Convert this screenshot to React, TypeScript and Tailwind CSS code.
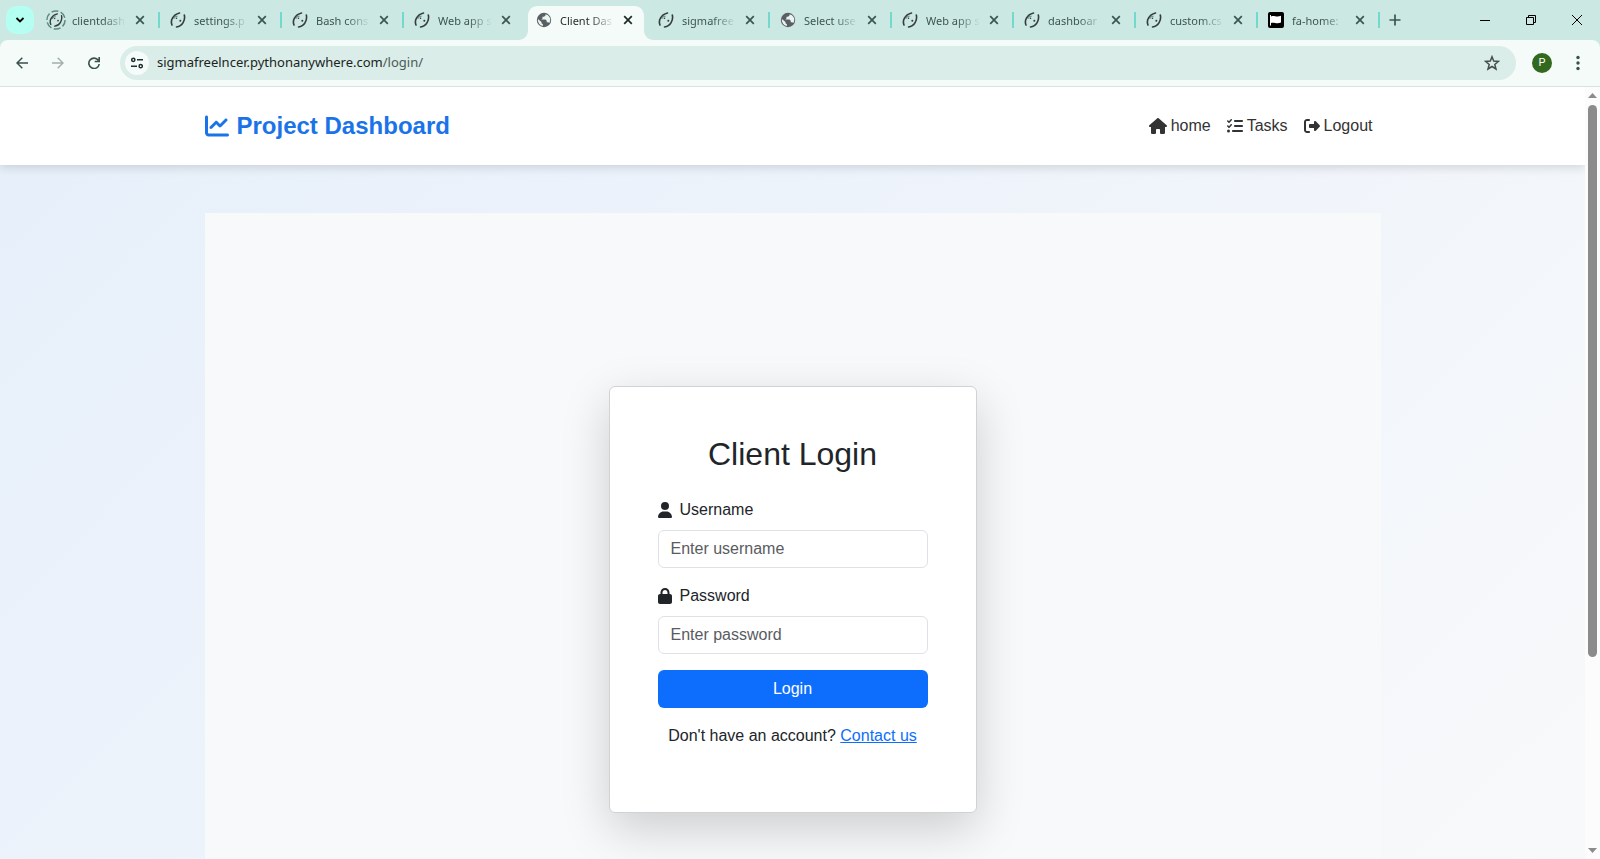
import React from "react";
import { FaChartLine, FaHouse, FaListCheck, FaRightFromBracket, FaUser, FaLock } from "react-icons/fa6";

type IconKind = "snake" | "loading" | "globe" | "flag";
type Tab = { title: string; icon: IconKind; active?: boolean; bar?: boolean };

const tabs: Tab[] = [
  { title: "clientdash", icon: "loading", bar: true },
  { title: "settings.p", icon: "snake", bar: true },
  { title: "Bash cons", icon: "snake", bar: true },
  { title: "Web app s", icon: "snake" },
  { title: "Client Das", icon: "globe", active: true },
  { title: "sigmafree", icon: "snake", bar: true },
  { title: "Select use", icon: "globe", bar: true },
  { title: "Web app s", icon: "snake", bar: true },
  { title: "dashboar", icon: "snake", bar: true },
  { title: "custom.cs", icon: "snake", bar: true },
  { title: "fa-home:", icon: "flag", bar: true },
];

function Snake({ className }: { className: string }) {
  return (
    <svg viewBox="0 0 16 16" className={className} fill="none" stroke="#343c3e" strokeLinecap="round">
      <path d="M2 13C.2 8.500 2.500 3 9.500 1" strokeWidth="1.600" />
      <path d="M4 6.500C4.800 4.800 6 4.200 7.200 4.200" strokeWidth=".7" />
      <path d="M14.300 3C15.500 8 12.500 14.500 6.500 15" strokeWidth="1.600" />
      <circle cx="6.500" cy="6.300" r=".8" fill="#343c3e" stroke="none" />
      <circle cx="10.300" cy="8.700" r="1" fill="#343c3e" stroke="none" />
    </svg>
  );
}

function TabIcon({ kind }: { kind: IconKind }) {
  if (kind === "snake") return <Snake className="size-4" />;
  if (kind === "loading")
    return (
      <span className="grid size-5 place-items-center">
        <svg viewBox="0 0 20 20" className="col-start-1 row-start-1 size-5" fill="none" stroke="#5f8a82" strokeWidth="1.500">
          <circle cx="10" cy="10" r="9.100" strokeDasharray="7 2.500" />
        </svg>
        <Snake className="col-start-1 row-start-1 size-3.5" />
      </span>
    );
  if (kind === "globe")
    return (
      <svg viewBox="0 0 16 16" className="size-4">
        <circle cx="8" cy="8" r="7.200" fill="#5a5f63" />
        <path
          d="M9.500 2.200v1.300L8 4.800H6.500v1.700L5.300 7.600h4.200l1.200 1.200v1.400h1.500l1.200.7A6.200 6.200 0 0 0 12 3.300ZM1.900 6.900 5.500 10v1.200l1.400 1v1.900A6.200 6.200 0 0 1 1.900 6.900Z"
          fill="#eaf5f2"
        />
      </svg>
    );
  return (
    <svg viewBox="0 0 16 16" className="size-4">
      <rect width="16" height="16" rx="2" fill="#000" />
      <path d="M2.500 3v10.500" stroke="#fff" />
      <path d="M3 4.500c3-1.700 5 1.200 10-.7v6.700c-4.500 2-7-.8-10 .6Z" fill="#fff" />
    </svg>
  );
}

function Cross() {
  return (
    <svg viewBox="0 0 10 10" className="size-2.5" stroke="currentColor" strokeWidth="1.700">
      <path d="M1.200 1.200l7.600 7.600M8.800 1.200 1.200 8.800" />
    </svg>
  );
}

function TabStrip() {
  return (
    <div className="flex h-10 items-center bg-[#cce8e2] text-[#3c5551]">
      <button aria-label="Search tabs" className="ml-1.5 grid size-7 shrink-0 place-items-center rounded-[10px] bg-[#b4fff1] text-black">
        <svg viewBox="0 0 10 10" className="size-2.5" fill="none" stroke="currentColor" strokeWidth="1.800">
          <path d="M1.500 3l3.500 3.500L8.500 3" />
        </svg>
      </button>
      <div className="ml-1 flex h-full">
        {tabs.map((t, i) => (
          <div key={i} className="relative flex h-full w-[122px] items-end pl-0.5">
            {t.active && (
              <svg viewBox="0 0 136 34" className="absolute bottom-0 -left-2 h-[34px] w-[136px]" fill="#f4fbf9">
                <path d="M0 34c6 0 10-4 10-10V10C10 4 14 0 20 0h96c6 0 10 4 10 10v14c0 6 4 10 10 10Z" />
              </svg>
            )}
            <div className={`relative flex h-full w-full items-center ${t.active ? "text-[#1f2a28]" : ""}`}>
              <span className="ml-1.5 grid w-5 shrink-0 place-items-center">
                <TabIcon kind={t.icon} />
              </span>
              <span className="mt-0.5 ml-1.5 w-[55px] font-['Noto_Sans',sans-serif] text-[11px] whitespace-nowrap [mask-image:linear-gradient(to_right,#000_55%,transparent_98%)]">
                {t.title}
              </span>
              <button aria-label={`Close ${t.title}`} className="ml-2 shrink-0">
                <Cross />
              </button>
            </div>
            {t.bar && <span className="absolute top-3 right-0 h-4 w-0.5 bg-[#72d9cb]" />}
          </div>
        ))}
      </div>
      <button aria-label="New tab" className="ml-[9px] shrink-0">
        <svg viewBox="0 0 12 12" className="size-3" stroke="currentColor" strokeWidth="1.700">
          <path d="M6 .5v11M.5 6h11" />
        </svg>
      </button>
      <div className="mr-[18px] ml-auto flex items-center gap-9 text-black">
        <button aria-label="Minimize">
          <svg viewBox="0 0 10 10" className="size-2.5" stroke="currentColor">
            <path d="M0 5.500h10" />
          </svg>
        </button>
        <button aria-label="Restore">
          <svg viewBox="0 0 10 10" className="size-2.5" fill="none" stroke="currentColor">
            <path d="M.5 2.500h7v7h-7zM2.500 2.500v-2h7v7h-2" />
          </svg>
        </button>
        <button aria-label="Close window">
          <svg viewBox="0 0 10 10" className="size-2.5" stroke="currentColor">
            <path d="M0 0l10 10M10 0 0 10" />
          </svg>
        </button>
      </div>
    </div>
  );
}

function Toolbar() {
  return (
    <div className="bg-[#cce8e2]">
      <div className="flex h-[47px] items-center rounded-t-lg border-b border-[#d5e4e0] bg-[#f4fbf9] text-[#3a504c]">
        <button aria-label="Back" className="ml-4 shrink-0">
          <svg viewBox="0 0 12 12" className="size-3" fill="none" stroke="currentColor" strokeWidth="1.500">
            <path d="M12 6H1M6.300.7 1 6l5.300 5.300" />
          </svg>
        </button>
        <button aria-label="Forward" className="ml-6 shrink-0 text-[#a3b0ad]">
          <svg viewBox="0 0 12 12" className="size-3" fill="none" stroke="currentColor" strokeWidth="1.500">
            <path d="M0 6h11M5.700.7 11 6l-5.300 5.300" />
          </svg>
        </button>
        <button aria-label="Reload" className="ml-6 shrink-0">
          <svg viewBox="0 0 12 12" className="size-3" fill="none" stroke="currentColor" strokeWidth="1.600">
            <path d="M10.300 3.300A5.200 5.200 0 1 0 11.200 7M11.200 0v4.500H6.700" />
          </svg>
        </button>
        <div className="ml-5 flex h-[34px] flex-1 items-center rounded-full bg-[#daede8] pr-4 pl-[5px]">
          <button aria-label="Site information" className="grid size-6 shrink-0 place-items-center rounded-full bg-[#f4fbf9] text-[#20302d]">
            <svg viewBox="0 0 12 12" className="size-3" fill="none" stroke="currentColor" strokeWidth="1.500">
              <circle cx="2.300" cy="2.800" r="1.600" />
              <path d="M6 2.800h6M0 9.200h6" />
              <circle cx="9.700" cy="9.200" r="1.600" />
            </svg>
          </button>
          <div className="ml-2 font-['Noto_Sans',sans-serif] text-[13px] text-[#1b2422]">
            sigmafreelncer.pythonanywhere.com<span className="text-[#4b5b58]">/login/</span>
          </div>
          <button aria-label="Bookmark" className="ml-auto text-[#474f4d]">
            <svg viewBox="0 0 16 16" className="size-4" fill="none" stroke="currentColor" strokeWidth="1.500">
              <path d="M8 1.800l1.700 4.300 4.700.3-3.600 3 1.200 4.600L8 11.500 4 14l1.200-4.600-3.600-3 4.700-.3Z" />
            </svg>
          </button>
        </div>
        <button aria-label="Profile" className="ml-4 grid size-5 shrink-0 place-items-center rounded-full bg-[#33691e] font-['Roboto',sans-serif] text-[11px] text-white">
          P
        </button>
        <button aria-label="Menu" className="mr-5 ml-6 shrink-0">
          <svg viewBox="0 0 4 16" className="h-4 w-1" fill="currentColor">
            <circle cx="2" cy="2.500" r="1.700" />
            <circle cx="2" cy="8" r="1.700" />
            <circle cx="2" cy="13.500" r="1.700" />
          </svg>
        </button>
      </div>
    </div>
  );
}

function Scrollbar() {
  return (
    <div className="flex w-[15px] shrink-0 flex-col items-center bg-[#fcfcfc] py-1.5">
      <svg viewBox="0 0 9 5" className="h-[5px] w-[9px]" fill="#8b8b8b">
        <path d="M0 5 4.500 0 9 5Z" />
      </svg>
      <div className="mt-[7px] h-[552px] w-[9px] rounded-full bg-[#8b8b8b]" />
      <svg viewBox="0 0 9 5" className="mt-auto h-[5px] w-[9px]" fill="#8b8b8b">
        <path d="M0 0h9L4.500 5Z" />
      </svg>
    </div>
  );
}

const inputClass =
  "mt-2 h-[38px] w-full rounded-md border border-[#dee2e6] bg-white px-3 text-base text-[#212529] placeholder:text-[#595c5f]";

function LoginCard() {
  return (
    <form className="mt-[173px] w-[368px] self-start rounded-md border border-[#d0d2d3] bg-white px-12 pt-12 pb-16 text-[#212529] shadow-[0_16px_48px_rgba(0,0,0,0.176)]">
      <h2 className="text-center text-[32px] leading-[39px]">Client Login</h2>
      <label htmlFor="username" className="mt-6 flex items-center gap-2">
        <FaUser className="h-4 w-3.5" />
        Username
      </label>
      <input id="username" type="text" placeholder="Enter username" className={inputClass} />
      <label htmlFor="password" className="mt-4 flex items-center gap-2">
        <FaLock className="h-4 w-3.5" />
        Password
      </label>
      <input id="password" type="password" placeholder="Enter password" className={inputClass} />
      <button type="submit" className="mt-4 h-[38px] w-full rounded-md bg-[#0d6efd] text-white">
        Login
      </button>
      <p className="mt-4 text-center">
        Don't have an account?{" "}
        <a href="#contact" className="text-[#0d6efd] underline">
          Contact us
        </a>
      </p>
    </form>
  );
}

export default function App() {
  return (
    <div className="flex h-screen flex-col overflow-hidden font-['Liberation_Sans',Arial,sans-serif]">
      <TabStrip />
      <Toolbar />
      <div className="flex min-h-0 flex-1">
        <div className="flex min-w-0 flex-1 flex-col overflow-hidden bg-linear-135 from-[#e6effa] via-[#eff4fb] to-[#f8f9fa]">
          <header className="z-10 bg-white shadow-[0_2px_10px_rgba(0,0,0,0.15)]">
            <div className="mx-auto flex h-[78px] max-w-[1176px] items-center justify-between">
              <a href="#top" className="flex items-center gap-2 text-2xl font-bold text-[#1a73e8]">
                <FaChartLine className="size-6" />
                Project Dashboard
              </a>
              <nav className="mr-2 flex gap-4 text-[#333]">
                <a href="#home" className="flex items-center gap-1">
                  <FaHouse className="h-4 w-[18px]" />
                  home
                </a>
                <a href="#tasks" className="flex items-center gap-1">
                  <FaListCheck className="size-4" />
                  Tasks
                </a>
                <a href="#logout" className="flex items-center gap-1">
                  <FaRightFromBracket className="size-4" />
                  Logout
                </a>
              </nav>
            </div>
          </header>
          <main className="mx-auto mt-12 flex w-full max-w-[1176px] flex-1 justify-center bg-[#f8f9fa]">
            <LoginCard />
          </main>
        </div>
        <Scrollbar />
      </div>
    </div>
  );
}
